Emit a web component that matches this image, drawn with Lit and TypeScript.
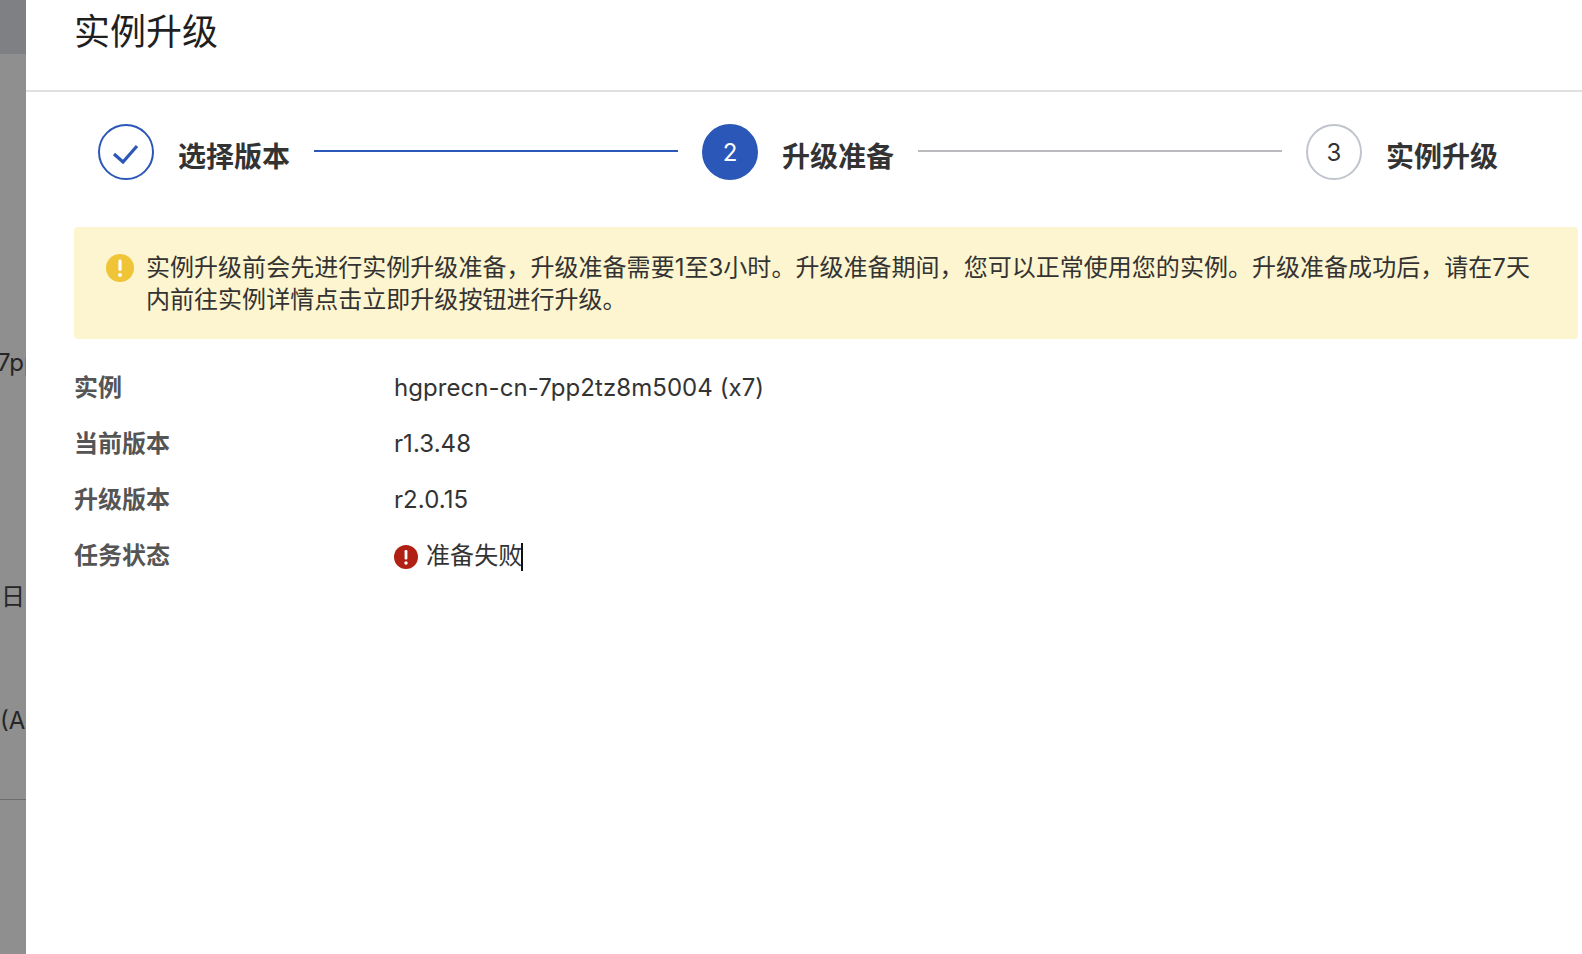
import { LitElement, html, css, svg } from "lit";
import { customElement } from "lit/decorators.js";

const steps = [
  { label: "选择版本", state: "done", mark: "" },
  { label: "升级准备", state: "current", mark: "2" },
  { label: "实例升级", state: "todo", mark: "3" },
];

const check = svg`<path d="M16 30 L25 38 L39 22" fill="none" stroke="#2b57b8" stroke-width="3.2" />`;

@customElement("app-root")
export class AppRoot extends LitElement {
  static styles = css`
    :host {
      display: flex;
      width: 1582px;
      height: 954px;
      overflow: hidden;
      background: #fff;
      font-family: Inter, "Noto Sans CJK SC", sans-serif;
      color: #333;
    }
    .backdrop {
      width: 26px;
      flex: none;
      background: #8f8f8f;
      display: flex;
      flex-direction: column;
      overflow: hidden;
      font-size: 24px;
      line-height: 32px;
      color: #262626;
    }
    .backdrop-top {
      height: 54px;
      flex: none;
      background: #7f8084;
    }
    .clip {
      white-space: nowrap;
      height: 32px;
    }
    .clip.a { margin-top: 293px; margin-left: -3px; }
    .clip.b { margin-top: 202px; margin-left: 1px; }
    .clip.c { margin-top: 92px; margin-left: 0; }
    .rule {
      margin-top: 62px;
      height: 1px;
      flex: none;
      background: #6d6d6d;
    }
    .panel {
      flex: 1;
      min-width: 0;
    }
    header {
      height: 92px;
      box-sizing: border-box;
      padding-left: 48px;
      border-bottom: 2px solid #e0e0e0;
      font-size: 36px;
      line-height: 64px;
      color: #1f1f1f;
    }
    .steps {
      display: flex;
      align-items: flex-start;
      padding: 32px 0 0 72px;
      height: 135px;
      box-sizing: border-box;
    }
    .step {
      display: flex;
      align-items: flex-start;
      gap: 24px;
    }
    .circle {
      width: 56px;
      height: 56px;
      flex: none;
      box-sizing: border-box;
      border-radius: 50%;
      border: 2px solid #c0c4cc;
      display: flex;
      align-items: center;
      justify-content: center;
      font-size: 24px;
      color: #333;
    }
    .circle svg { display: block; flex: none; }
    .step.done .circle { border-color: #2b57b8; }
    .step.current .circle { background: #2b57b8; border-color: #2b57b8; color: #fff; }
    .name {
      font-size: 28px;
      font-weight: 700;
      line-height: 40px;
      margin-top: 13px;
      color: #333;
      white-space: nowrap;
    }
    .line {
      width: 364px;
      height: 2px;
      flex: none;
      margin: 26px 24px 0;
      background: #b8babd;
    }
    .line.on { background: #2b57b8; }
    .banner {
      margin-left: 48px;
      width: 1504px;
      height: 112px;
      box-sizing: border-box;
      padding: 25px 32px 23px;
      display: flex;
      gap: 12px;
      background: #fdf5cf;
      border-radius: 4px;
      font-size: 24px;
      line-height: 32px;
      letter-spacing: 0.03px;
      color: #333;
    }
    .banner svg { flex: none; margin-top: 2px; }
    .banner p { margin: 0; }
    .rows {
      margin: 21px 0 0 48px;
      display: grid;
      grid-template-columns: 320px 1fr;
      grid-auto-rows: 56px;
      align-items: center;
      font-size: 24px;
      line-height: 32px;
    }
    .key {
      font-weight: 700;
      color: #555;
    }
    .val {
      color: #333;
      display: flex;
      align-items: center;
      gap: 8px;
      letter-spacing: 0.07px;
    }
    .val svg { margin-top: 2px; }
    .caret {
      display: inline-block;
      width: 2px;
      height: 28px;
      margin-left: -1px;
      background: #111;
      vertical-align: middle;
    }
  `;

  render() {
    return html`
      <div class="backdrop">
        <div class="backdrop-top"></div>
        <div class="clip a">7pp</div>
        <div class="clip b">日</div>
        <div class="clip c">(A</div>
        <div class="rule"></div>
      </div>
      <main class="panel">
        <header>实例升级</header>
        <section class="steps">
          ${steps.map(
            (s, i) => html`
              <div class="step ${s.state}">
                <div class="circle">
                  ${s.state === "done"
                    ? html`<svg width="52" height="52" viewBox="2 2 52 52">${check}</svg>`
                    : s.mark}
                </div>
                <div class="name">${s.label}</div>
              </div>
              ${i < steps.length - 1
                ? html`<div class="line ${i === 0 ? "on" : ""}"></div>`
                : ""}
            `
          )}
        </section>
        <section class="banner">
          <svg width="28" height="28" viewBox="0 0 28 28">
            <circle cx="14" cy="14" r="14" fill="#f0c437" />
            <rect x="12.4" y="5.5" width="3.2" height="11.5" rx="1.4" fill="#fff" />
            <circle cx="14" cy="21" r="2" fill="#fff" />
          </svg>
          <p>实例升级前会先进行实例升级准备，升级准备需要1至3小时。升级准备期间，您可以正常使用您的实例。升级准备成功后，请在7天内前往实例详情点击立即升级按钮进行升级。</p>
        </section>
        <section class="rows">
          <div class="key">实例</div>
          <div class="val">hgprecn-cn-7pp2tz8m5004 (x7)</div>
          <div class="key">当前版本</div>
          <div class="val">r1.3.48</div>
          <div class="key">升级版本</div>
          <div class="val">r2.0.15</div>
          <div class="key">任务状态</div>
          <div class="val">
            <svg width="24" height="24" viewBox="0 0 24 24">
              <circle cx="12" cy="12" r="12" fill="#b02014" />
              <rect x="10.6" y="5" width="2.8" height="9.5" rx="1.2" fill="#fff" />
              <circle cx="12" cy="18" r="1.7" fill="#fff" />
            </svg>
            <span>准备失败<span class="caret"></span></span>
          </div>
        </section>
      </main>
    `;
  }
}
